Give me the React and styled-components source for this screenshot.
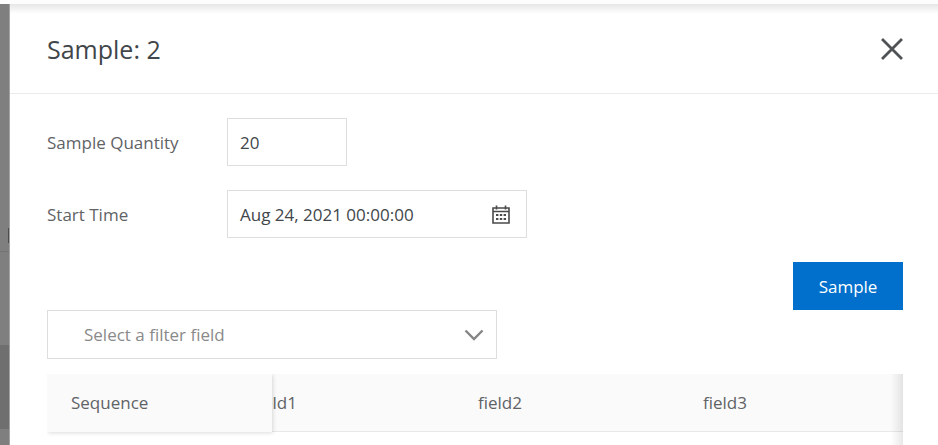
import React from 'react';
import styled, { createGlobalStyle } from 'styled-components';

const Global = createGlobalStyle`
  html, body { margin: 0; padding: 0; background: #fff; }
  body { font-family: "Open Sans", "Noto Sans", sans-serif; overflow: hidden; }
`;

const Page = styled.div`
  width: 938px;
  height: 445px;
  display: flex;
  flex-direction: column;
  overflow: hidden;
  background: #fff;
`;
const TopGap = styled.div`
  height: 4px;
  flex: none;
  background: #fdfdfd;
`;
const Body = styled.div`
  flex: 1;
  display: flex;
  min-height: 0;
`;
const Backdrop = styled.div`
  position: relative;
  box-sizing: border-box;
  width: 10px;
  flex: none;
  display: flex;
  flex-direction: column;
  background: #7f7f7f;
  border-right: 1px solid #a3a3a3;
`;
const BackdropBlock = styled.div`
  height: ${p => p.$h}px;
  background: ${p => p.$c};
  flex: none;
`;
const BackdropMark = styled.div`
  position: absolute;
  right: 0;
  top: 224px;
  width: 1px;
  height: 15px;
  background: #4c4c4c;
`;
const Drawer = styled.div`
  flex: 1;
  min-width: 0;
  display: flex;
  flex-direction: column;
  background: linear-gradient(#e6e6e6 0, #fff 10px);
`;
const Header = styled.header`
  height: 89px;
  flex: none;
  display: flex;
  align-items: center;
  justify-content: space-between;
  padding: 0 35px 0 37px;
  border-bottom: 1px solid #ebebeb;
`;
const Title = styled.h1`
  margin: 0;
  font-size: 25px;
  font-weight: 400;
  line-height: 32px;
  color: #41464a;
`;
const Close = styled.svg`
  width: 22px;
  height: 22px;
  display: block;
`;
const Content = styled.div`
  padding: 24px 35px 0 37px;
  display: flex;
  flex-direction: column;
`;
const FormRow = styled.div`
  display: flex;
  align-items: center;
  height: 48px;
  margin-bottom: 24px;
`;
const Label = styled.label`
  width: 180px;
  flex: none;
  font-size: 17px;
  color: #5f6366;
`;
const Field = styled.div`
  box-sizing: border-box;
  width: ${p => p.$w}px;
  height: 48px;
  display: flex;
  align-items: center;
  justify-content: space-between;
  padding: 0 15px 0 12px;
  border: 1px solid #dedede;
  font-size: 17px;
  color: #41464a;
`;
const ActionRow = styled.div`
  display: flex;
  justify-content: flex-end;
`;
const SampleButton = styled.button`
  width: 110px;
  height: 48px;
  border: 0;
  padding: 0;
  background: #0070cc;
  color: #fff;
  font: 400 17px "Open Sans", sans-serif;
`;
const Select = styled.div`
  box-sizing: border-box;
  width: 450px;
  height: 49px;
  display: flex;
  align-items: center;
  justify-content: space-between;
  padding: 0 12px 0 36px;
  border: 1px solid #dedede;
  font-size: 17px;
  color: #8a8a8a;
`;
const TableWrap = styled.div`
  position: relative;
  margin-top: 15px;
  height: 71px;
  overflow: hidden;
`;
const HeadRow = styled.div`
  height: 58px;
  box-sizing: border-box;
  padding: 0 0 1px 206px;
  display: grid;
  grid-template-columns: 225px 225px 225px;
  align-items: center;
  background: #fafafa;
  border-bottom: 1px solid #e8e8e8;
  font-size: 17px;
  color: #5f6366;
`;
const HeadCell = styled.div``;
const FixedCol = styled.div`
  position: absolute;
  left: 0;
  top: 0;
  width: 225px;
  height: 58px;
  box-sizing: border-box;
  padding: 0 0 2px 24px;
  display: flex;
  align-items: center;
  background: #fafafa;
  box-shadow: 1px 1px 4px rgba(0, 0, 0, 0.14);
  font-size: 17px;
  color: #5f6366;
`;
const RightFade = styled.div`
  position: absolute;
  right: 0;
  top: 0;
  bottom: 0;
  width: 12px;
  background: linear-gradient(to right, rgba(0, 0, 0, 0), rgba(0, 0, 0, 0.09));
`;

export default function App() {
  return (
    <Page>
      <Global />
      <TopGap />
      <Body>
        <Backdrop>
          <BackdropBlock $h={247} $c="#7f7f7f" />
          <BackdropBlock $h={1} $c="#747474" />
          <BackdropBlock $h={93} $c="#7f7f7f" />
          <BackdropBlock $h={84} $c="#6f6f6f" />
          <BackdropMark />
        </Backdrop>
        <Drawer>
          <Header>
            <Title>Sample: 2</Title>
            <Close viewBox="0 0 22 22" fill="none" stroke="#4f5356" strokeWidth="2.8" strokeLinecap="square">
              <path d="M2 2 L20 20 M20 2 L2 20" />
            </Close>
          </Header>
          <Content>
            <FormRow>
              <Label>Sample Quantity</Label>
              <Field $w={120}>20</Field>
            </FormRow>
            <FormRow>
              <Label>Start Time</Label>
              <Field $w={300}>
                Aug 24, 2021 00:00:00
                <svg width="20" height="20" viewBox="0 0 20 20" fill="none">
                  <path d="M2 4h16v15H2z M2 7.5h16" stroke="#4a4a4a" strokeWidth="1.6" />
                  <path d="M5.5 1.5v4M14.5 1.5v4" stroke="#4a4a4a" strokeWidth="1.6" />
                  <path d="M5 10h2.4v2H5zM8.8 10h2.4v2H8.8zM12.6 10H15v2h-2.4zM5 14h2.4v2H5zM8.8 14h2.4v2H8.8zM12.6 14H15v2h-2.4z" fill="#4a4a4a" />
                </svg>
              </Field>
            </FormRow>
            <ActionRow>
              <SampleButton>Sample</SampleButton>
            </ActionRow>
            <Select>
              Select a filter field
              <svg width="20" height="12" viewBox="0 0 20 12" fill="none">
                <path d="M1.5 1.5 L10 10 L18.5 1.5" stroke="#858585" strokeWidth="2.4" />
              </svg>
            </Select>
            <TableWrap>
              <HeadRow>
                <HeadCell>field1</HeadCell>
                <HeadCell>field2</HeadCell>
                <HeadCell>field3</HeadCell>
              </HeadRow>
              <FixedCol>Sequence</FixedCol>
              <RightFade />
            </TableWrap>
          </Content>
        </Drawer>
      </Body>
    </Page>
  );
}
